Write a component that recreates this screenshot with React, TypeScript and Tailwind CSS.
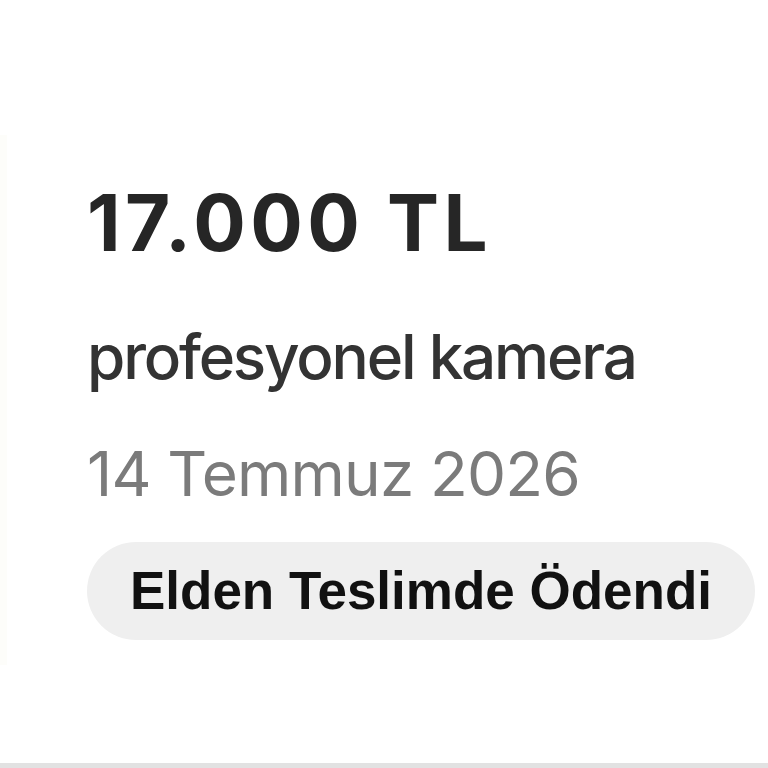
export default function App() {
  return (
    <div className="flex h-[768px] w-[768px] flex-col bg-white">
      <div className="flex flex-1">
        {/* faint edge of the photo next to the listing */}
        <div className="mt-[135px] h-[530px] w-[7px] bg-[#fdfdfa]" />
        <div className="flex flex-1 flex-col pt-[184px] pl-[80px] pr-[13px] font-['Inter',sans-serif]">
          <div className="text-[78px] leading-none font-bold tracking-[4.4px] text-[#262626]">17.000 TL</div>
          <div className="mt-[64px] text-[62px] leading-none font-medium tracking-[-2.2px] text-[#333333]">
            profesyonel kamera
          </div>
          <div className="mt-[55px] text-[62px] leading-none tracking-[-0.8px] text-[#7b7b7b]">14 Temmuz 2026</div>
          <div className="mt-[37px] flex h-[98px] items-center justify-center rounded-full bg-[#efefef] font-['Liberation_Sans',sans-serif] text-[53px] font-bold text-[#111111]">
            Elden Teslimde Ödendi
          </div>
        </div>
      </div>
      <div className="h-[5px] bg-[#e2e2e2]" />
    </div>
  );
}
